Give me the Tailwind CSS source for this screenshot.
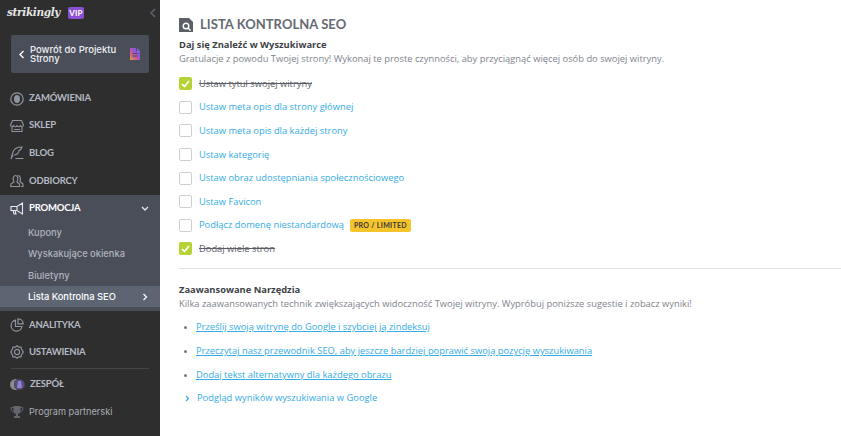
<!DOCTYPE html>
<html><head><meta charset="utf-8"><title>Lista Kontrolna SEO</title>
<script src="https://cdn.jsdelivr.net/npm/@tailwindcss/browser@4"></script></head>
<body class="w-[841px] h-[436px] overflow-hidden bg-white font-['Open_Sans',sans-serif]">
<div class="flex h-[436px]">
<aside class="w-[160px] shrink-0 bg-[#2e2e2e] flex flex-col text-[#b4b9c3] font-['Lato',sans-serif]">
  <div class="h-[25px] pl-[7px] pr-[2px] flex items-center">
    <span class="font-['DejaVu_Serif',serif] italic font-bold text-[10.500px] tracking-[-0.35px] text-[#e4e4e4] w-[61px]">strikingly</span>
    <span class="bg-[#8a4fd3] text-white text-[8px] font-bold rounded-[2px] w-[16px] text-center h-[12px] leading-[12px] tracking-[0.2px]">VIP</span>
    <svg class="ml-auto mr-[1px]" width="8" height="10" viewBox="0 0 8 10"><path d="M6 1 2 5l4 4" fill="none" stroke="#5c6068" stroke-width="1.6"/></svg>
  </div>
  <div class="mx-[11px] mt-[10px] h-[38px] bg-[#4a4e59] rounded-[2px] flex items-center pl-[7px] pr-[9px] text-white">
    <svg width="7" height="9" viewBox="0 0 7 9"><path d="M5.5 1 2 4.5 5.5 8" fill="none" stroke="#fff" stroke-width="1.4"/></svg>
    <span class="ml-[5px] font-['Inter',sans-serif] font-medium text-[9.5px] leading-[9.5px] text-[#eceef1] w-[96px]">Powrót do Projektu Strony</span>
    <svg class="ml-auto" width="10" height="12" viewBox="0 0 10 12"><defs><linearGradient id="d" x1="0" y1="1" x2="1" y2="0"><stop offset="0" stop-color="#e0a020"/><stop offset=".35" stop-color="#c85a9a"/><stop offset=".7" stop-color="#8a55dc"/><stop offset="1" stop-color="#4f8fe0"/></linearGradient></defs><path d="M0 0h6v3h1V0l3 3v9H0z" fill="url(#d)"/><path d="M2.500 5.500h5M2.500 8h5" stroke="#4a4e59" stroke-width="1"/></svg>
  </div>
  <nav class="mt-[12px] flex flex-col text-[9.5px] font-bold tracking-[-0.2px]">
    <a class="h-[27px] flex items-center pl-[10px] gap-[5px]"><svg width="14" height="14" viewBox="0 0 14 14"><circle cx="7" cy="7" r="6.200" fill="none" stroke="#8f949e" stroke-width="1.200"/><path d="M7 3c2 0 3 1.500 3 4s-1 4-3 4-3-1.500-3-4 1-4 3-4z" fill="#8f949e"/></svg>ZAMÓWIENIA</a>
    <a class="h-[27px] flex items-center pl-[10px] gap-[5px]"><svg width="14" height="14" viewBox="0 0 14 14" fill="none" stroke="#8f949e" stroke-width="1.100"><path d="M2.500 1.500h9l2 4.500a1.500 1.500 0 0 1-3 0 1.700 1.700 0 0 1-3.500 0 1.700 1.700 0 0 1-3.500 0 1.500 1.500 0 0 1-3 0zM2 8v4.500h10V8M4 10.500h6"/></svg>SKLEP</a>
    <a class="h-[28px] flex items-center pl-[10px] gap-[5px]"><svg width="14" height="14" viewBox="0 0 14 14" fill="none" stroke="#8f949e" stroke-width="1.100"><path d="M1 13 3 6c1-3 4-5 9-5-.5 2-1.500 3-3 3.500 0 2-2 4-5 4.500M3 9l-1 2M5.500 12.500h8"/></svg>BLOG</a>
    <a class="h-[28px] flex items-center pl-[10px] gap-[5px]"><svg width="14" height="14" viewBox="0 0 14 14" fill="none" stroke="#8f949e" stroke-width="1.100"><path d="M4 8C2.500 5 3 1.500 5.500 1.500S8.500 5 7 8l2.500 2v2.500H.8V10zM7.500 1.500c3 0 3.500 3.500 2.500 6l3 2.500v2.500h-2"/></svg>ODBIORCY</a>
    <div class="bg-[#4a4e59]">
      <a class="h-[26px] pt-[1px] flex items-center pl-[10px] pr-[11px] gap-[5px] text-white"><svg width="14" height="14" viewBox="0 0 14 14" fill="none" stroke="#e6e7ea" stroke-width="1.100"><path d="M1 4.500h6l5.500-3.500v11L7 8.500H1zM7 4.500v4M3 8.500l1 3.500h2L5 8.500"/></svg>PROMOCJA<svg class="ml-auto" width="8" height="6" viewBox="0 0 8 6"><path d="M1 1l3 3 3-3" fill="none" stroke="#e6e7ea" stroke-width="1.300"/></svg></a>
      <div class="mt-[1px] flex flex-col font-['Inter',sans-serif] font-medium text-[9.300px] tracking-[0.02px] text-[#b0b4bd]">
        <a class="h-[21px] flex items-center pl-[28px]">Kupony</a>
        <a class="h-[22px] flex items-center pl-[28px]">Wyskakujące okienka</a>
        <a class="h-[21px] flex items-center pl-[28px]">Biuletyny</a>
        <a class="h-[21px] flex items-center pl-[28px] pr-[12px] bg-[#5d6472] text-white">Lista Kontrolna SEO<svg class="ml-auto" width="6" height="8" viewBox="0 0 6 8"><path d="M1.500 1l3 3-3 3" fill="none" stroke="#fff" stroke-width="1.200"/></svg></a>
      </div>
      <div class="h-[4px]"></div>
    </div>
    <a class="h-[28px] flex items-center pl-[10px] gap-[5px]"><svg width="14" height="14" viewBox="0 0 14 14" fill="none" stroke="#8f949e" stroke-width="1.200"><path d="M5.500 2.200A5.500 5.500 0 1 0 12 8.500H5.500zM8 .8v5h5.200A5.200 5.200 0 0 0 8 .8z"/></svg>ANALITYKA</a>
    <a class="h-[26px] flex items-center pl-[10px] gap-[5px]"><svg width="14" height="14" viewBox="0 0 14 14" fill="none" stroke="#8f949e" stroke-width="1.200"><path d="M7 .8l1.800 1.400 2.200-.1.600 2.200L13.300 7l-1.700 2.700-.6 2.200-2.200-.1L7 13.200l-1.800-1.400-2.200.1-.6-2.200L.7 7l1.700-2.700.6-2.200 2.200.1z"/><circle cx="7" cy="7" r="2.600"/></svg>USTAWIENIA</a>
    <div class="mx-[11px] mt-[3px] h-px bg-[#44464b]"></div>
    <a class="h-[30px] flex items-center pl-[10px] gap-[5px]"><svg width="15" height="13" viewBox="0 0 15 13"><circle cx="5.500" cy="6.500" r="5.500" fill="#85868c"/><circle cx="4.500" cy="6.500" r="2.500" fill="#a39d92"/><circle cx="9.500" cy="6.500" r="5.400" fill="#5a4c8c" stroke="#3a3a40" stroke-width=".8"/><path d="M8 3h3l1 7H7z" fill="#8d84c8"/></svg>ZESPÓŁ</a>
    <a class="h-[25px] flex items-center pl-[10px] gap-[5px] font-['Inter',sans-serif] font-normal text-[9.200px] tracking-normal text-[#a9aeb8]"><svg width="14" height="14" viewBox="0 0 14 14"><path d="M3.500 1h7v4.500a3.500 3.500 0 0 1-7 0zM6 9h2v2h2v2H4v-2h2z" fill="#62666e"/><path d="M3.500 2.500H1.200v1.500c0 1.500 1 2.500 2.500 2.800M10.500 2.500h2.300v1.500c0 1.500-1 2.500-2.500 2.800" fill="none" stroke="#62666e" stroke-width="1"/></svg>Program partnerski</a>
  </nav>
</aside>
<main class="flex-1 pl-[19px] pt-[16px] text-[9.350px] text-[#80848d]">
  <div class="flex items-center gap-[7px] h-[18px]">
    <svg width="14" height="14" viewBox="0 0 14 14"><path d="M0 0h10l4 4v10H0z" fill="#5b5f68"/><circle cx="7" cy="8" r="2.800" fill="none" stroke="#fff" stroke-width="1.400"/><path d="M9 10l2.500 2.500" stroke="#fff" stroke-width="1.400"/></svg>
    <h1 class="font-['Lato',sans-serif] font-bold text-[13px] tracking-[0.05px] text-[#656973]">LISTA KONTROLNA SEO</h1>
  </div>
  <h2 class="mt-[4px] h-[14px] leading-[14px] font-bold text-[#3c3f46]">Daj się Znaleźć w Wyszukiwarce</h2>
  <p class="h-[14px] leading-[14px]">Gratulacje z powodu Twojej strony! Wykonaj te proste czynności, aby przyciągnąć więcej osób do swojej witryny.</p>
  <ul class="mt-[6px] flex flex-col">
    <li class="h-[23.600px] flex items-center gap-[7px]"><span class="w-[13px] h-[13px] rounded-[2px] bg-[#b5d334] flex items-center justify-center"><svg width="9" height="8" viewBox="0 0 9 8"><path d="M1 4l2.500 2.500L8 1" fill="none" stroke="#fff" stroke-width="1.600"/></svg></span><span class="line-through text-[#5b5e66]">Ustaw tytuł swojej witryny</span></li>
    <li class="h-[23.600px] flex items-center gap-[7px]"><span class="w-[13px] h-[13px] rounded-[2px] border border-[#cdcfd3] bg-white"></span><a class="text-[#35ace4]">Ustaw meta opis dla strony głównej</a></li>
    <li class="h-[23.600px] flex items-center gap-[7px]"><span class="w-[13px] h-[13px] rounded-[2px] border border-[#cdcfd3] bg-white"></span><a class="text-[#35ace4]">Ustaw meta opis dla każdej strony</a></li>
    <li class="h-[23.600px] flex items-center gap-[7px]"><span class="w-[13px] h-[13px] rounded-[2px] border border-[#cdcfd3] bg-white"></span><a class="text-[#35ace4]">Ustaw kategorię</a></li>
    <li class="h-[23.600px] flex items-center gap-[7px]"><span class="w-[13px] h-[13px] rounded-[2px] border border-[#cdcfd3] bg-white"></span><a class="text-[#35ace4]">Ustaw obraz udostępniania społecznościowego</a></li>
    <li class="h-[23.600px] flex items-center gap-[7px]"><span class="w-[13px] h-[13px] rounded-[2px] border border-[#cdcfd3] bg-white"></span><a class="text-[#35ace4]">Ustaw Favicon</a></li>
    <li class="h-[23.600px] flex items-center gap-[6px]"><span class="w-[13px] h-[13px] rounded-[2px] border border-[#cdcfd3] bg-white mr-[1px]"></span><a class="text-[#35ace4]">Podłącz domenę niestandardową</a><span class="bg-[#f5c32c] text-[#3a3a3a] font-['Lato',sans-serif] font-bold text-[7px] tracking-[0.3px] rounded-[2px] h-[13px] leading-[13px] px-[4px]">PRO / LIMITED</span></li>
    <li class="h-[23.600px] flex items-center gap-[7px]"><span class="w-[13px] h-[13px] rounded-[2px] bg-[#b5d334] flex items-center justify-center"><svg width="9" height="8" viewBox="0 0 9 8"><path d="M1 4l2.500 2.500L8 1" fill="none" stroke="#fff" stroke-width="1.600"/></svg></span><span class="line-through text-[#5b5e66]">Dodaj wiele stron</span></li>
  </ul>
  <div class="mt-[7.500px] h-px bg-[#e2e2e2]"></div>
  <h2 class="mt-[14px] h-[14px] leading-[14px] font-bold text-[#3c3f46]">Zaawansowane Narzędzia</h2>
  <p class="h-[14px] leading-[14px]">Kilka zaawansowanych technik zwiększających widoczność Twojej witryny. Wypróbuj poniższe sugestie i zobacz wyniki!</p>
  <ul class="mt-[4px] flex flex-col text-[#35ace4]">
    <li class="h-[24px] flex items-center"><span class="w-[3px] h-[3px] ml-[5px] mr-[9px] rounded-full bg-[#777b85]"></span><a class="underline">Prześlij swoją witrynę do Google i szybciej ją zindeksuj</a></li>
    <li class="h-[24px] flex items-center"><span class="w-[3px] h-[3px] ml-[5px] mr-[9px] rounded-full bg-[#777b85]"></span><a class="underline">Przeczytaj nasz przewodnik SEO, aby jeszcze bardziej poprawić swoją pozycję wyszukiwania</a></li>
    <li class="h-[23.500px] flex items-center"><span class="w-[3px] h-[3px] ml-[5px] mr-[9px] rounded-full bg-[#777b85]"></span><a class="underline">Dodaj tekst alternatywny dla każdego obrazu</a></li>
    <li class="h-[23.500px] flex items-center"><svg class="ml-[6px] mr-[7px]" width="5" height="7" viewBox="0 0 5 7"><path d="M1 1l2.500 2.500L1 6" fill="none" stroke="#35ace4" stroke-width="1.200"/></svg><a>Podgląd wyników wyszukiwania w Google</a></li>
  </ul>
</main>
</div>
</body></html>
